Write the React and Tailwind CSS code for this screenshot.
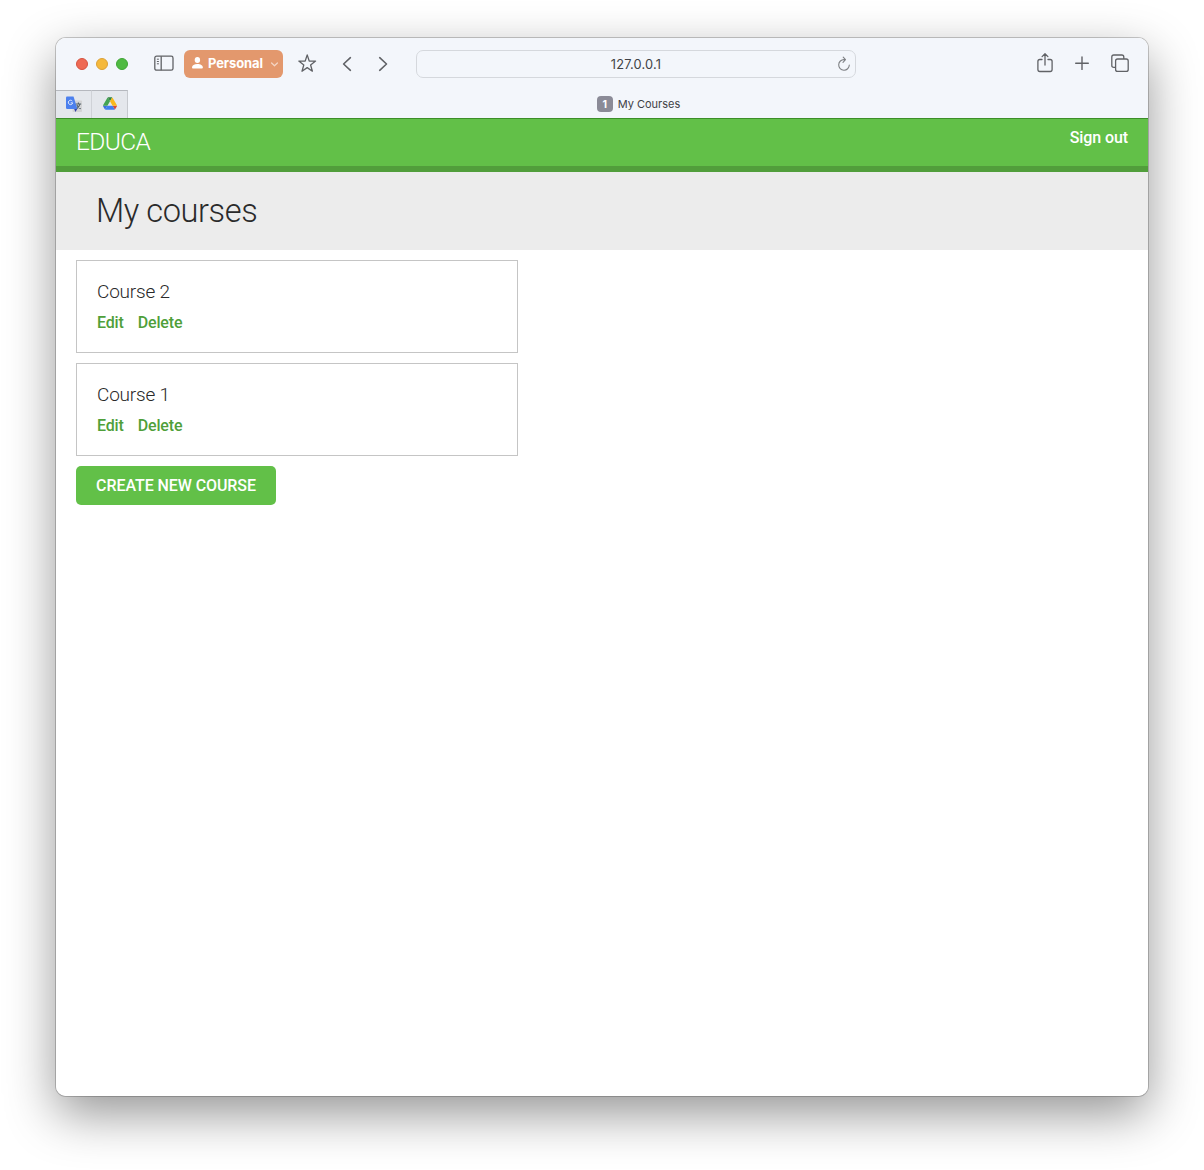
const courses = ["Course 2", "Course 1"];

function Toolbar() {
  return (
    <div className="flex h-[52px] items-center pl-5 pr-[18px] text-[#606266]">
      <div className="flex gap-2">
        <span className="h-3 w-3 rounded-full border border-[#d65340] bg-[#ee6a54]" />
        <span className="h-3 w-3 rounded-full border border-[#dca136] bg-[#f5b93c]" />
        <span className="h-3 w-3 rounded-full border border-[#3fa535] bg-[#4fba42]" />
      </div>
      <svg className="mb-[2px] ml-[26px]" width="20" height="16" viewBox="0 0 20 16" fill="none" stroke="currentColor" strokeWidth="1.3">
        <rect x="0.8" y="1.2" width="18.2" height="14" rx="1.8" />
        <path d="M7.2 1.2v14" />
        <path d="M2.9 4.2h2M2.9 6.5h2M2.9 8.8h2" strokeWidth="1" />
      </svg>
      <div className="ml-[10px] flex h-7 w-[99px] items-center rounded-[6px] bg-[#e3986d] pl-2 text-white">
        <svg className="mb-[2px]" width="12" height="12" viewBox="0 0 12 12" fill="currentColor">
          <ellipse cx="5.4" cy="3" rx="2.7" ry="3" />
          <path d="M0 10.6C0 8.4 2.3 7.1 5.4 7.1s5.5 1.3 5.5 3.5q0 .9-1 .9h-9q-.9 0-.9-.9z" />
        </svg>
        <span className="mb-px ml-1 w-[60px] font-[Inter] text-[13px] font-bold leading-none tracking-[-0.1px]">Personal</span>
        <svg className="ml-[3px]" width="7" height="5" viewBox="0 0 7 5" fill="none" stroke="#f4d6c5" strokeWidth="1.2" strokeLinecap="round" strokeLinejoin="round">
          <path d="M.6 1l2.9 2.8L6.4 1" />
        </svg>
      </div>
      <svg className="mb-[2px] ml-[14px]" width="20" height="20" viewBox="0 0 20 20" fill="none" stroke="currentColor" strokeWidth="1.3" strokeLinejoin="round">
        <path d="M10.2 1.9l2 6.1 6.4.1-5 3.9 1.8 6.2-5.2-3.6L5 18.2 6.8 12l-5-3.9 6.4-.1z" />
      </svg>
      <svg className="ml-[24px]" width="12" height="16" viewBox="0 0 12 16" fill="none" stroke="currentColor" strokeWidth="1.6" strokeLinecap="round" strokeLinejoin="round">
        <path d="M9.4 1.7L2.6 8l6.8 6.3" />
      </svg>
      <svg className="ml-6" width="12" height="16" viewBox="0 0 12 16" fill="none" stroke="currentColor" strokeWidth="1.6" strokeLinecap="round" strokeLinejoin="round">
        <path d="M2.7 1.7L9.5 8l-6.8 6.3" />
      </svg>
      <div className="ml-[27px] flex h-7 w-[440px] items-center rounded-[7px] border border-[#d5d8dd] pl-[18px] pr-1">
        <span className="flex-1 pt-[2px] text-center font-[Inter] text-[12.8px] leading-none tracking-[0.2px] text-[#404246]">127.0.0.1</span>
        <svg width="14" height="16" viewBox="0 0 14 16" fill="none" stroke="#7e8084" strokeWidth="1.1" strokeLinecap="round" strokeLinejoin="round">
          <path d="M7.2 3.6A5.3 5.3 0 1 0 12.3 9M6.2 1.2l2.3 2.5L6 6.3" />
        </svg>
      </div>
      <svg className="mb-[2px] ml-auto" width="18" height="22" viewBox="0 0 18 22" fill="none" stroke="currentColor" strokeWidth="1.3" strokeLinecap="round" strokeLinejoin="round">
        <path d="M6 7.5H3.8Q1.9 7.5 1.9 9.4v8.2q0 1.9 1.9 1.9h10.4q1.9 0 1.9-1.9V9.4q0-1.9-1.9-1.9H12M9 13V2M6.1 4.6L9 1.8l2.9 2.8" />
      </svg>
      <svg className="mb-[2px] ml-[21px]" width="14" height="14" viewBox="0 0 14 14" fill="none" stroke="currentColor" strokeWidth="1.4" strokeLinecap="round">
        <path d="M7 .9v12.6M.7 7.2h12.6" />
      </svg>
      <svg className="mb-[2px] ml-[21px]" width="20" height="20" viewBox="0 0 20 20" fill="none" stroke="currentColor" strokeWidth="1.3" strokeLinejoin="round">
        <rect x="5.6" y="6" width="12.6" height="12.4" rx="2" />
        <path d="M5.6 14.4H3.8q-2 0-2-2V4q0-2 2-2h8q2 0 2 2v2" />
      </svg>
    </div>
  );
}

function TabBar() {
  return (
    <div className="flex h-7">
      <div className="flex h-7 w-9 items-center border-r border-t border-r-[#cfd2d7] border-t-[#b5b8be] bg-[#e4e7ec] pl-[10px]">
        <svg width="17" height="17" viewBox="0 0 17 17">
          <rect x="6.5" y="4.5" width="9.5" height="11.5" rx=".8" fill="#d3d4d6" />
          <path d="M8 12.5h3.5L9.4 16z" fill="#3440a8" />
          <path d="M1 .5h6.5L11.5 13H1.2Q0 13 0 11.8V1.5Q0 .5 1 .5z" fill="#4c80ee" />
          <path d="M6.3 5.1a2.2 2.2 0 1 0 .4 1.8H4.7" fill="none" stroke="#e7eefc" strokeWidth="1" />
          <path d="M9.8 8h5.4M12.4 6.6V8M14 8.2q-1 3-3.2 4.4M10.9 9q1.2 2.6 3.8 3.8" fill="none" stroke="#55636b" strokeWidth="1.1" />
        </svg>
      </div>
      <div className="flex h-7 w-9 items-center justify-center border-r border-t border-r-[#c6c9ce] border-t-[#b5b8be] bg-[#e4e7ec]">
        <svg className="mb-[2px]" width="14" height="13" viewBox="0 0 87.3 78">
          <path fill="#3c6fe0" d="M6.6 66.85l3.85 6.65c.8 1.4 1.95 2.5 3.3 3.3L27.5 53H0c0 1.55.4 3.1 1.2 4.5z" />
          <path fill="#43a453" d="M43.65 25L29.9 1.2c-1.35.8-2.5 1.9-3.3 3.3l-25.4 44A9.06 9.06 0 0 0 0 53h27.5z" />
          <path fill="#d94838" d="M73.55 76.8c1.35-.8 2.5-1.9 3.3-3.3l1.6-2.75L86.1 57.5c.8-1.4 1.2-2.95 1.2-4.5H59.8l5.85 11.5z" />
          <path fill="#338642" d="M43.65 25L57.4 1.2C56.05.4 54.5 0 52.9 0H34.4c-1.6 0-3.15.45-4.5 1.2z" />
          <path fill="#3f7ff0" d="M59.8 53H27.5L13.75 76.8c1.35.8 2.9 1.2 4.5 1.2h50.8c1.6 0 3.15-.45 4.5-1.2z" />
          <path fill="#f9b91b" d="M73.4 26.5L60.7 4.5c-.8-1.4-1.95-2.5-3.3-3.3L43.65 25 59.8 53h27.45c0-1.55-.4-3.1-1.2-4.5z" />
        </svg>
      </div>
      <div className="flex flex-1 items-center justify-center pl-px font-[Inter]">
        <span className="flex h-4 w-4 items-center justify-center rounded-[4px] bg-[#8b8b97] pt-[2px] text-[10.5px] font-bold leading-none text-white">1</span>
        <span className="ml-[5px] pt-px text-[11px] leading-none text-[#3f4145]">My Courses</span>
      </div>
    </div>
  );
}

function CourseCard({ title }) {
  return (
    <article className="h-[93px] w-[442px] border border-[#c5c5c5] px-5 pt-5">
      <h2 className="text-[19px] font-[330] leading-[22px] tracking-[-0.2px] text-[#2a2a2a]">{title}</h2>
      <p className="mt-[10px] flex gap-[14px] text-[16px] font-medium leading-5 tracking-[-0.16px] text-[#4f9f3a]">
        <a href="#">Edit</a>
        <a href="#">Delete</a>
      </p>
    </article>
  );
}

export default function App() {
  return (
    <div className="h-[1170px] w-[1204px] overflow-hidden bg-white px-14 pt-[38px]">
      <div className="h-[1058px] w-[1092px] rounded-[10px] shadow-[0_0_0_1px_rgba(0,0,0,0.2),0_18px_50px_rgba(0,0,0,0.42)]">
        <div className="h-full overflow-hidden rounded-[10px] bg-white font-[Roboto,sans-serif]">
          <div className="h-20 bg-[#f3f6fb]">
            <Toolbar />
            <TabBar />
          </div>
          <header className="flex h-[54px] justify-between border-b-[6px] border-t border-b-[#519e3b] border-t-[#3c8e28] bg-[#62c048] px-5 text-white">
            <a href="#" className="pt-[9px] text-[24.5px] font-[340] leading-7 tracking-[-0.6px]">EDUCA</a>
            <a href="#" className="pt-[9px] text-[16px] font-medium leading-5 tracking-[-0.1px]">Sign out</a>
          </header>
          <h1 className="h-[78px] bg-[#ececec] pl-10 pt-[19px] text-[32.6px] font-[330] leading-10 tracking-[-0.42px] text-[#2a2a2a]">My courses</h1>
          <main className="flex flex-col items-start gap-[10px] px-5 pt-[10px]">
            {courses.map((title) => (
              <CourseCard key={title} title={title} />
            ))}
            <a href="#" className="flex h-[39px] w-[200px] items-center justify-center rounded-[5px] bg-[#62c048] text-[16px] font-medium tracking-[-0.08px] text-white">
              CREATE NEW COURSE
            </a>
          </main>
        </div>
      </div>
    </div>
  );
}
